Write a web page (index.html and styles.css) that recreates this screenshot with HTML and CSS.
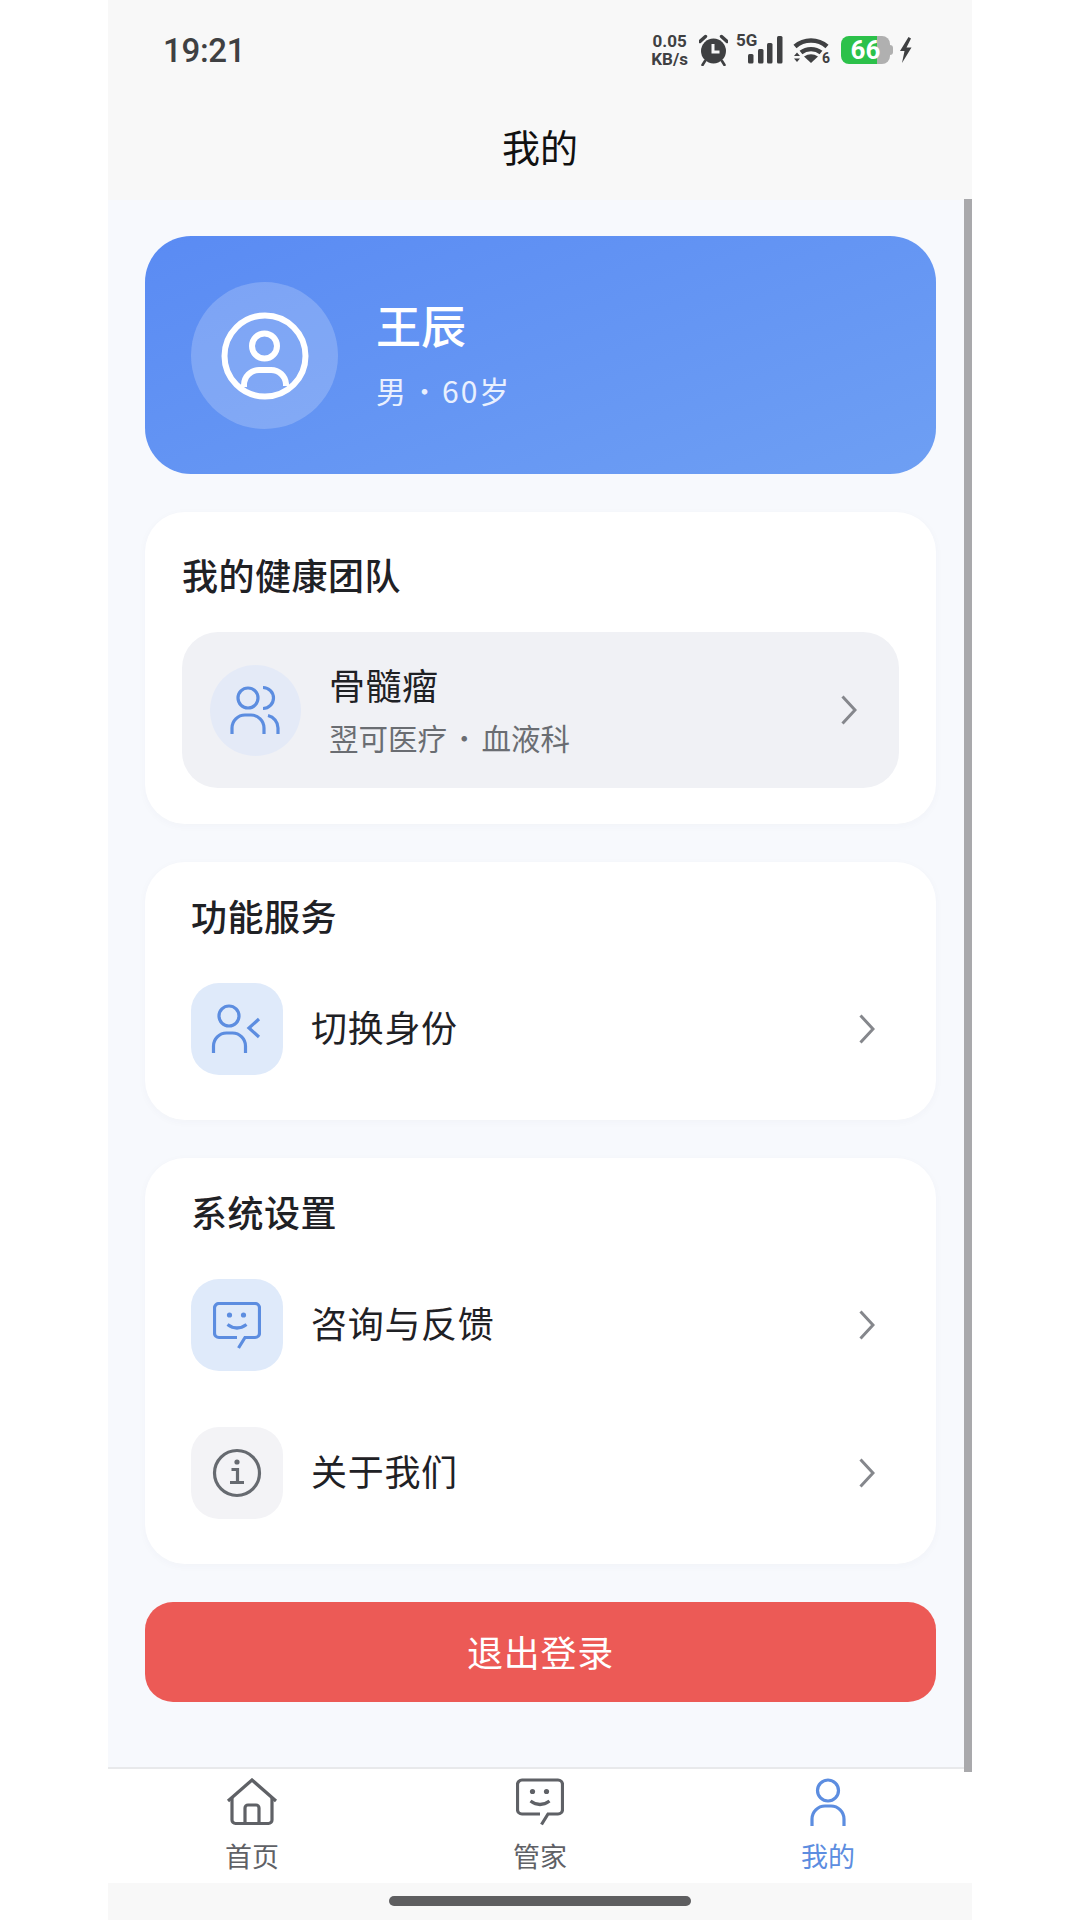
FILE: index.html
```html
<!DOCTYPE html>
<html lang="zh-CN">
<head>
    <meta charset="utf-8">
    <title>我的</title>
    <link rel="stylesheet" href="styles.css">
</head>
<body>
    <div class="phone">
        <div class="top">
            <div class="status-bar">
                <span class="clock">19:21</span>
                <div class="status-icons">
                    <div class="speed"><span>0.05</span><span>KB/s</span></div>
                    <svg class="ic-alarm" width="29" height="32" viewBox="0 0 29 32">
                        <circle cx="14.5" cy="17" r="12.5" fill="#3f4042"/>
                        <path d="M1 7.5 6.5 2.5M28 7.5 22.5 2.5" stroke="#3f4042" stroke-width="3.4" stroke-linecap="round"/>
                        <path d="M6 27 3.5 31M23 27 25.5 31" stroke="#3f4042" stroke-width="2.6" stroke-linecap="round"/>
                        <path d="M14 10v8h6.5" fill="none" stroke="#f8f8f8" stroke-width="3"/>
                    </svg>
                    <div class="signal">
                        <span class="net">5G</span>
                        <svg width="47" height="28" viewBox="0 0 47 28">
                            <rect x="12" y="18" width="5.500" height="9.500" rx="1.500" fill="#3f4042"/>
                            <rect x="22" y="13" width="5.500" height="14.500" rx="1.500" fill="#3f4042"/>
                            <rect x="31" y="7" width="5.500" height="20.500" rx="1.500" fill="#3f4042"/>
                            <rect x="41" y="0" width="5.500" height="27.500" rx="1.500" fill="#3f4042"/>
                        </svg>
                    </div>
                    <div class="wifi">
                        <svg width="37" height="27" viewBox="0 0 37 27">
                            <path d="M2 9.5C11 1.5 25 1.5 34 9.500" fill="none" stroke="#3f4042" stroke-width="4.6"/>
                            <path d="M8 15.500C13.500 11 22.500 11 28 15.500" fill="none" stroke="#3f4042" stroke-width="4.400"/>
                            <path d="M11 19.500Q18 15 25 19.500L18 26Z" fill="#3f4042"/>
                            <path d="M1 19 4 15.500 7 19ZM1 21.500 4 25 7 21.500Z" fill="#3f4042"/>
                        </svg>
                        <span class="wifi-gen">6</span>
                    </div>
                    <div class="battery"><span>66</span></div>
                    <svg class="ic-bolt" width="13" height="26" viewBox="0 0 13 26">
                        <path d="M9.500 0 1 14h4.500L3 26 12.500 10.500H7.500L12 1.500Z" fill="#3f4042"/>
                    </svg>
                </div>
            </div>
            <h1 class="page-title">我的</h1>
        </div>

        <main class="content">
            <section class="profile">
                <div class="avatar">
                    <svg width="147" height="147" viewBox="0 0 147 147" fill="none" stroke="#fff" stroke-width="6">
                        <circle cx="74" cy="74" r="40.500"/>
                        <circle cx="73.500" cy="64" r="12.500"/>
                        <path d="M53 105v-2a15 15 0 0 1 15-15h12a15 15 0 0 1 15 14v2"/>
                    </svg>
                </div>
                <div class="profile-text">
                    <div class="profile-name">王辰</div>
                    <div class="profile-meta">男<span class="dot">·</span>60岁</div>
                </div>
            </section>

            <section class="card team-card">
                <h2 class="card-title team-title">我的健康团队</h2>
                <div class="team-row">
                    <div class="team-icon">
                        <svg width="91" height="91" viewBox="0 0 91 91" fill="none" stroke="#5c8de0" stroke-width="3.200">
                            <circle cx="38" cy="33" r="10"/>
                            <path d="M22 69v-6a13 13 0 0 1 13-13h6a13 13 0 0 1 13 13v6"/>
                            <path d="M53 22.500a10.500 10.500 0 0 1 0 21"/>
                            <path d="M58 50.500a13 13 0 0 1 10 12.500v6"/>
                        </svg>
                    </div>
                    <div class="team-text">
                        <div class="team-name">骨髓瘤</div>
                        <div class="team-meta">翌可医疗<span class="dot">·</span>血液科</div>
                    </div>
                    <svg class="chevron" width="16" height="30" viewBox="0 0 16 30"><path d="M1.500 1.500 14 15 1.500 28.500"/></svg>
                </div>
            </section>

            <section class="card">
                <h2 class="card-title">功能服务</h2>
                <div class="menu">
                    <div class="menu-row">
                        <div class="menu-icon blue">
                            <svg width="92" height="92" viewBox="0 0 92 92" fill="none" stroke="#5c8de0" stroke-width="3.200">
                                <circle cx="38" cy="33" r="10"/>
                                <path d="M22.500 70v-7a13 13 0 0 1 13-13h6a13 13 0 0 1 13 13v7"/>
                                <path d="M68 36 58 45l10 9"/>
                            </svg>
                        </div>
                        <span class="menu-label">切换身份</span>
                        <svg class="chevron" width="16" height="30" viewBox="0 0 16 30"><path d="M1.500 1.500 14 15 1.500 28.500"/></svg>
                    </div>
                </div>
            </section>

            <section class="card">
                <h2 class="card-title">系统设置</h2>
                <div class="menu">
                    <div class="menu-row">
                        <div class="menu-icon blue">
                            <svg class="ic-chat" width="48" height="47" viewBox="0 0 48 47" fill="none" stroke="#5c8de0" stroke-width="3.200">
                                <path d="M24 35.500H6a4.500 4.500 0 0 1-4.500-4.500V6A4.500 4.500 0 0 1 6 1.500h36A4.500 4.500 0 0 1 46.500 6v25a4.500 4.500 0 0 1-4.500 4.500H32L25.500 46"/>
                                <circle cx="16.500" cy="13" r="2.600" fill="#5c8de0" stroke="none"/>
                                <circle cx="30.500" cy="13" r="2.600" fill="#5c8de0" stroke="none"/>
                                <path d="M14.500 22.500q9.500 7 19 0"/>
                            </svg>
                        </div>
                        <span class="menu-label">咨询与反馈</span>
                        <svg class="chevron" width="16" height="30" viewBox="0 0 16 30"><path d="M1.500 1.500 14 15 1.500 28.500"/></svg>
                    </div>
                    <div class="menu-row">
                        <div class="menu-icon grey">
                            <svg width="50" height="50" viewBox="0 0 50 50" fill="none" stroke="#666a70" stroke-width="3.200">
                                <circle cx="25" cy="25" r="22.500"/>
                                <circle cx="25" cy="14" r="2.600" fill="#666a70" stroke="none"/>
                                <path d="M19.500 21.500H25.500V34M18 34.500H32"/>
                            </svg>
                        </div>
                        <span class="menu-label">关于我们</span>
                        <svg class="chevron" width="16" height="30" viewBox="0 0 16 30"><path d="M1.500 1.500 14 15 1.500 28.500"/></svg>
                    </div>
                </div>
            </section>

            <button class="logout">退出登录</button>
        </main>

        <nav class="tabbar">
            <div class="tab">
                <svg class="tab-icon" width="52" height="48" viewBox="0 0 52 48" fill="none" stroke="#5f6166" stroke-width="3.200">
                    <path d="M2 23 26 2l24 21"/>
                    <path d="M6 19.500V42a3.500 3.500 0 0 0 3.500 3.500h33A3.500 3.500 0 0 0 46 42V19.500"/>
                    <path d="M19 45V30a3 3 0 0 1 3-3h8a3 3 0 0 1 3 3v15"/>
                </svg>
                <span>首页</span>
            </div>
            <div class="tab">
                <svg class="tab-icon" width="48" height="48" viewBox="0 0 48 47" fill="none" stroke="#5f6166" stroke-width="3.200">
                    <path d="M24 35.500H6a4.500 4.500 0 0 1-4.500-4.500V6A4.500 4.500 0 0 1 6 1.500h36A4.500 4.500 0 0 1 46.500 6v25a4.500 4.500 0 0 1-4.500 4.500H32L25.500 46"/>
                    <circle cx="16.500" cy="13" r="2.600" fill="#5f6166" stroke="none"/>
                    <circle cx="30.500" cy="13" r="2.600" fill="#5f6166" stroke="none"/>
                    <path d="M14.500 22.500q9.500 7 19 0"/>
                </svg>
                <span>管家</span>
            </div>
            <div class="tab active">
                <svg class="tab-icon" width="36" height="48" viewBox="0 0 36 48" fill="none" stroke="#5c8de0" stroke-width="3.200">
                    <circle cx="18" cy="12.500" r="10.500"/>
                    <path d="M2 48V41a13 13 0 0 1 13-13h6a13 13 0 0 1 13 13v7"/>
                </svg>
                <span>我的</span>
            </div>
        </nav>

        <div class="home-area"><div class="home-bar"></div></div>

        <div class="scrollbar"></div>
    </div>
</body>
</html>
```

FILE: styles.css
```css
* {
    margin: 0;
    padding: 0;
    box-sizing: border-box;
}

body {
    font-family: "Noto Sans CJK SC", "Noto Sans", sans-serif;
    background-color: #fff;
    color: #1f2125;
}

.phone {
    position: relative;
    width: 864px;
    height: 1920px;
    margin: 0 auto;
    display: flex;
    flex-direction: column;
    background-color: #f7f9fd;
}

/* Status bar + page title */
.top {
    height: 200px;
    background-color: #f8f8f8;
}

.status-bar {
    height: 100px;
    padding: 0 60px 0 55px;
    display: flex;
    align-items: center;
    justify-content: space-between;
}

.clock {
    font-family: Roboto, sans-serif;
    font-size: 33px;
    font-weight: 500;
    letter-spacing: -0.3px;
    color: #3f4042;
}

.status-icons {
    display: flex;
    align-items: center;
}

.speed {
    display: flex;
    flex-direction: column;
    align-items: center;
    font-family: Roboto, sans-serif;
    font-size: 17px;
    line-height: 18px;
    font-weight: 700;
    color: #3f4042;
    margin-right: 11px;
}

.ic-alarm {
    margin-right: 8px;
}

.signal {
    position: relative;
    width: 47px;
    height: 28px;
    margin-right: 10px;
}

.signal svg {
    display: block;
}

.net {
    position: absolute;
    left: 0;
    top: -3px;
    font-family: Roboto, sans-serif;
    font-size: 17px;
    line-height: 14px;
    font-weight: 700;
    color: #3f4042;
}

.wifi {
    position: relative;
    width: 37px;
    height: 27px;
    margin-right: 11px;
}

.wifi svg {
    display: block;
}

.wifi-gen {
    position: absolute;
    right: 0;
    bottom: 0;
    font-family: Roboto, sans-serif;
    font-size: 14px;
    line-height: 12px;
    font-weight: 700;
    color: #3f4042;
}

.battery {
    position: relative;
    width: 49px;
    height: 28px;
    margin-right: 9px;
    border-radius: 8px;
    background: linear-gradient(to right, #2cc14a 0 36px, #b0b0b0 36px);
    display: flex;
    align-items: center;
    justify-content: center;
}

.battery::after {
    content: "";
    position: absolute;
    right: -3px;
    top: 9px;
    width: 3px;
    height: 10px;
    border-radius: 0 3px 3px 0;
    background-color: #b0b0b0;
}

.battery span {
    font-family: Roboto, sans-serif;
    font-size: 26px;
    font-weight: 700;
    color: #fff;
}

.page-title {
    height: 96px;
    font-size: 38px;
    line-height: 92px;
    font-weight: 400;
    text-align: center;
    color: #111;
}

/* Scrolling area */
.content {
    flex: 1;
    padding: 36px 36px 0 37px;
    display: flex;
    flex-direction: column;
    gap: 38px;
}

.profile {
    height: 238px;
    padding-left: 46px;
    border-radius: 46px;
    background: linear-gradient(160deg, #5a8bf3, #6e9ff3);
    display: flex;
    align-items: center;
    gap: 38px;
    color: #fff;
}

.avatar {
    width: 147px;
    height: 147px;
    border-radius: 50%;
    background-color: rgba(255, 255, 255, 0.2);
}

.avatar svg {
    display: block;
}

.profile-name {
    margin-top: -6px;
    font-size: 45px;
    line-height: 60px;
    font-weight: 500;
}

.profile-meta {
    margin-top: 15px;
    font-size: 30px;
    line-height: 40px;
    letter-spacing: 2px;
    color: #e9f0fe;
}

/* the middle dot is a full em wide in the CJK face */
.dot {
    margin: 0 0.5px 0 1.5px;
    font-weight: 300;
}

.card {
    padding: 28px 61px 45px 46px;
    border-radius: 40px;
    background-color: #fff;
    box-shadow: 0 2px 8px rgba(60, 70, 100, 0.03);
}

.card-title {
    font-size: 36px;
    line-height: 50px;
    font-weight: 500;
    letter-spacing: 0.5px;
    color: #1f2125;
}

.team-card {
    padding: 37px 37px 36px 37px;
}

.team-title {
    margin-bottom: 33px;
}

.team-row {
    height: 156px;
    padding: 0 42px 0 28px;
    border-radius: 36px;
    background-color: #f0f1f5;
    display: flex;
    align-items: center;
}

.team-icon {
    width: 91px;
    height: 91px;
    margin-right: 28px;
    border-radius: 50%;
    background-color: #e4eaf7;
}

.team-icon svg {
    display: block;
}

.team-text {
    flex: 1;
    margin-bottom: 5px;
}

.team-name {
    font-size: 36px;
    line-height: 50px;
    letter-spacing: 0.5px;
}

.team-meta {
    margin-top: 8px;
    font-size: 29.500px;
    line-height: 40px;
    color: #6a6d72;
}

.team-meta .dot {
    margin: 0 2.500px;
}

.chevron {
    flex: none;
    fill: none;
    stroke: #85878c;
    stroke-width: 3;
}

.menu {
    margin-top: 43px;
    display: flex;
    flex-direction: column;
    gap: 56px;
}

.menu-row {
    display: flex;
    align-items: center;
}

.menu-icon {
    width: 92px;
    height: 92px;
    margin-right: 28px;
    border-radius: 28px;
    display: flex;
    align-items: center;
    justify-content: center;
}

.menu-icon.blue {
    background-color: #dfeafa;
}

.menu-icon.grey {
    background-color: #f3f3f6;
}

.menu-label {
    flex: 1;
    padding-bottom: 7px;
    font-size: 36px;
    line-height: 50px;
    letter-spacing: 0.7px;
}

.logout {
    height: 100px;
    padding-bottom: 3px;
    border: none;
    border-radius: 28px;
    background-color: #ec5a56;
    color: #fff;
    font-family: inherit;
    font-size: 36px;
    letter-spacing: 0.7px;
}

/* Bottom navigation */
.tabbar {
    height: 116px;
    padding-top: 9px;
    border-top: 2px solid #e8e9eb;
    background-color: #fff;
    display: grid;
    grid-template-columns: repeat(3, 1fr);
}

.tab {
    display: flex;
    flex-direction: column;
    align-items: center;
    font-size: 27px;
    line-height: 36px;
    color: #5f6166;
}

.tab-icon {
    display: block;
    height: 48px;
    margin-bottom: 12px;
}

.tab.active {
    color: #5c8de0;
}

.home-area {
    height: 37px;
    background-color: #f8f8f8;
    display: flex;
    justify-content: center;
    padding-top: 13px;
}

.home-bar {
    width: 302px;
    height: 10px;
    border-radius: 5px;
    background-color: #5e5e60;
}

.scrollbar {
    position: absolute;
    top: 199px;
    right: 0;
    width: 8px;
    height: 1573px;
    background-color: #a9a9ac;
}
```
